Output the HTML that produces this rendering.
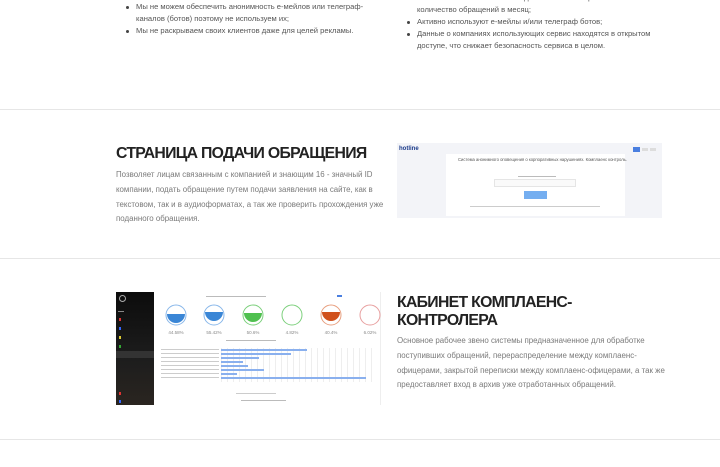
<!DOCTYPE html>
<html><head><meta charset="utf-8"><style>
*{margin:0;padding:0;box-sizing:border-box}
body{width:720px;height:467px;background:#fff;font-family:"Liberation Sans","DejaVu Sans",sans-serif;position:relative;overflow:hidden}
.a{position:absolute}
ul{list-style:none}
li{position:relative;padding-left:12px;font-size:7.6px;color:#555;line-height:12px;white-space:nowrap}
li:before{content:"";position:absolute;left:2px;top:4.5px;width:3px;height:3px;border-radius:50%;background:#444}
.hr{position:absolute;left:0;width:720px;height:1px;background:#e6e6e6}
h2{font-size:15.8px;font-weight:bold;color:#222;line-height:18px;letter-spacing:-0.7px;white-space:nowrap}
p.t{font-size:7.9px;color:#7a7a7a;line-height:14.8px}
.dots{position:absolute;height:2px;background:#ddd}
</style></head><body>
<ul class="a" style="left:124px;top:1px;width:290px">
<li>Мы не можем обеспечить анонимность е-мейлов или телеграф-<br>каналов (ботов) поэтому не используем их;</li>
<li>Мы не раскрываем своих клиентов даже для целей рекламы.</li>
</ul>
<div class="a" style="left:417px;top:-8px;font-size:7.6px;color:#555;line-height:12px;white-space:nowrap">Устанавливается плата за каждый заявки или ограничивается<br>количество обращений в месяц;</div>
<ul class="a" style="left:405px;top:16px;width:310px">
<li>Активно используют е-мейлы и/или телеграф ботов;</li>
<li>Данные о компаниях использующих сервис находятся в открытом<br>доступе, что снижает безопасность сервиса в целом.</li>
</ul>
<div class="hr" style="top:109px"></div>
<h2 class="a" style="left:116px;top:145px">СТРАНИЦА ПОДАЧИ ОБРАЩЕНИЯ</h2>
<p class="a t" style="left:116px;top:168px;width:275px">Позволяет лицам связанным с компанией и знающим 16 - значный ID компании, подать обращение путем подачи заявления на сайте, как в текстовом, так и в аудиоформатах, а так же проверить прохождения уже поданного обращения.</p>
<div class="a" style="left:397px;top:143px;width:265px;height:75px;background:#f3f4f8">
 <div class="a" style="left:2px;top:3px;font-size:6px;font-weight:bold;color:#1a3a8a">hotline</div>
 <div class="a" style="left:236px;top:4px;width:7px;height:5px;background:#4a7fe0"></div>
 <div class="a" style="left:245px;top:5px;width:6px;height:3px;background:#ddd"></div>
 <div class="a" style="left:253px;top:5px;width:6px;height:3px;background:#ddd"></div>
 <div class="a" style="left:49px;top:11px;width:179px;height:62px;background:#fff">
  <div class="a" style="left:12px;top:3px;font-size:4.2px;color:#555;white-space:nowrap">Система анонимного оповещения о корпоративных нарушениях. Комплаенс контроль.</div>
  <div class="dots" style="left:72px;top:22px;width:38px;height:1px;background:#bbb"></div>
  <div class="a" style="left:48px;top:25px;width:82px;height:8px;border:1px solid #e5e5e5;background:#fafafa"></div>
  <div class="a" style="left:78px;top:37px;width:23px;height:8px;background:#74aef0"></div>
  <div class="dots" style="left:24px;top:52px;width:130px;height:1px;background:#ccc"></div>
 </div>
</div>
<div class="hr" style="top:258px"></div>
<div class="a" style="left:116px;top:292px;width:265px;height:113px;background:#fff;border-right:1px solid #eee">
 <div class="a" style="left:0;top:0;width:38px;height:113px;background:linear-gradient(#0c0c0c,#1d1d1d 60%,#2a2520)"></div>
 <div class="a" style="left:3px;top:3px;width:7px;height:7px;border:1px solid #aaa;border-radius:50%"></div>
 <div class="a" style="left:2px;top:19px;width:6px;height:1px;background:#888"></div>
 <div class="a" style="left:3px;top:26px;width:2px;height:3px;background:#d33"></div>
 <div class="a" style="left:3px;top:35px;width:2px;height:3px;background:#36f"></div>
 <div class="a" style="left:3px;top:44px;width:2px;height:3px;background:#dc3"></div>
 <div class="a" style="left:3px;top:53px;width:2px;height:3px;background:#3a3"></div>
 <div class="a" style="left:0;top:59px;width:38px;height:7px;background:#333"></div>
 <div class="a" style="left:3px;top:100px;width:2px;height:3px;background:#d33"></div>
 <div class="a" style="left:3px;top:108px;width:2px;height:3px;background:#36f"></div>
 <div class="dots" style="left:90px;top:4px;width:60px;height:1px;background:#bbb"></div>
 <div class="a" style="left:221px;top:3px;width:5px;height:2px;background:#4a7fe0"></div>
 <svg class="a" style="left:38px;top:10px" width="227" height="36">
  <g stroke-width="1" fill="none">
   <circle cx="22" cy="13" r="10" stroke="#8ab8ea"/>
   <circle cx="60" cy="13" r="10" stroke="#8ab8ea"/>
   <circle cx="99" cy="13" r="10" stroke="#7dd07d"/>
   <circle cx="138" cy="13" r="10" stroke="#7dd07d"/>
   <circle cx="177" cy="13" r="10" stroke="#e8a080"/>
   <circle cx="216" cy="13" r="10" stroke="#e8a0a0"/>
  </g>
  <path d="M13 12a9 9 0 0 0 18 0z" fill="#3a86d6"/>
  <path d="M51 10a9 9 0 0 0 18 0z" fill="#3a86d6"/>
  <path d="M90 11a9 9 0 0 0 18 0z" fill="#4fc04f"/>
  <path d="M168 10a9 9 0 0 0 18 0z" fill="#d0501c"/>
  <g font-size="4.5" fill="#888" text-anchor="middle" font-family="Liberation Sans">
   <text x="22" y="32">44.58%</text><text x="60" y="32">55.42%</text><text x="99" y="32">50.6%</text>
   <text x="138" y="32">4.82%</text><text x="177" y="32">40.4%</text><text x="216" y="32">6.02%</text>
  </g>
 </svg>
 <div class="dots" style="left:110px;top:48px;width:50px;height:1px;background:#bbb"></div>
 <div class="a" style="left:105px;top:56px;width:155px;height:34px;background:repeating-linear-gradient(90deg,#eee 0 1px,transparent 1px 6px)"></div>
 <div class="a" style="left:105px;top:57px;width:86px;height:2px;background:#8ab0ee"></div>
 <div class="a" style="left:105px;top:61px;width:70px;height:2px;background:#8ab0ee"></div>
 <div class="a" style="left:105px;top:65px;width:38px;height:2px;background:#8ab0ee"></div>
 <div class="a" style="left:105px;top:69px;width:22px;height:2px;background:#8ab0ee"></div>
 <div class="a" style="left:105px;top:73px;width:27px;height:2px;background:#8ab0ee"></div>
 <div class="a" style="left:105px;top:77px;width:43px;height:2px;background:#8ab0ee"></div>
 <div class="a" style="left:105px;top:81px;width:16px;height:2px;background:#8ab0ee"></div>
 <div class="a" style="left:105px;top:85px;width:145px;height:2px;background:#8ab0ee"></div>
 <div class="a" style="left:45px;top:57px;width:58px;height:30px;background:repeating-linear-gradient(#ccc 0 1px,transparent 1px 4px)"></div>
 <div class="dots" style="left:120px;top:101px;width:40px;height:1px;background:#ccc"></div>
 <div class="dots" style="left:125px;top:108px;width:45px;height:1px;background:#bbb"></div>
</div>
<h2 class="a" style="left:397px;top:294px">КАБИНЕТ КОМПЛАЕНС-<br>КОНТРОЛЕРА</h2>
<p class="a t" style="left:397px;top:334px;width:272px">Основное рабочее звено системы предназначенное для обработке поступивших обращений, перераспределение между комплаенс-офицерами, закрытой переписки между комплаенс-офицерами, а так же предоставляет вход в архив уже отработанных обращений.</p>
<div class="hr" style="top:439px"></div>
</body></html>
